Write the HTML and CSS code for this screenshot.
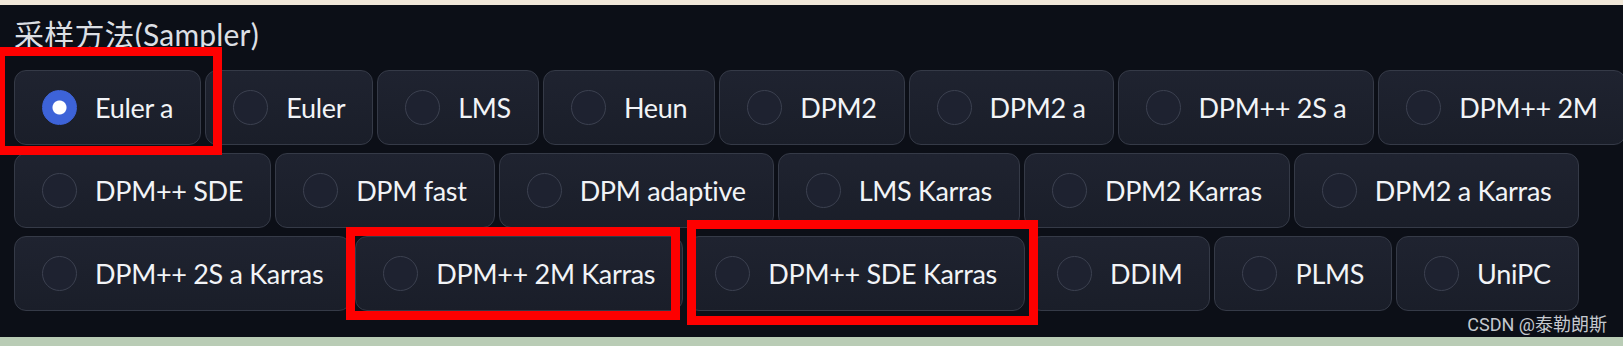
FILE: index.html
```html
<!DOCTYPE html>
<html>

<head>
    <meta charset="UTF-8">
    <title>采样方法</title>
    <link rel="stylesheet" href="styles.css">
</head>

<body>
    <div class="top-strip"></div>
    <div class="panel">
        <div class="panel-label">采样方法(Sampler)</div>
        <div class="options">
            <div class="row">
                <label class="opt"><input type="radio" name="sampler" checked><span>Euler a</span></label>
                <label class="opt"><input type="radio" name="sampler"><span>Euler</span></label>
                <label class="opt"><input type="radio" name="sampler"><span>LMS</span></label>
                <label class="opt"><input type="radio" name="sampler"><span>Heun</span></label>
                <label class="opt"><input type="radio" name="sampler"><span>DPM2</span></label>
                <label class="opt"><input type="radio" name="sampler"><span>DPM2 a</span></label>
                <label class="opt"><input type="radio" name="sampler"><span>DPM++ 2S a</span></label>
                <label class="opt"><input type="radio" name="sampler"><span>DPM++ 2M</span></label>
            </div>
            <div class="row">
                <label class="opt"><input type="radio" name="sampler"><span>DPM++ SDE</span></label>
                <label class="opt"><input type="radio" name="sampler"><span>DPM fast</span></label>
                <label class="opt"><input type="radio" name="sampler"><span>DPM adaptive</span></label>
                <label class="opt"><input type="radio" name="sampler"><span>LMS Karras</span></label>
                <label class="opt"><input type="radio" name="sampler"><span>DPM2 Karras</span></label>
                <label class="opt"><input type="radio" name="sampler"><span>DPM2 a Karras</span></label>
            </div>
            <div class="row">
                <label class="opt"><input type="radio" name="sampler"><span>DPM++ 2S a Karras</span></label>
                <label class="opt"><input type="radio" name="sampler"><span>DPM++ 2M Karras</span></label>
                <label class="opt"><input type="radio" name="sampler"><span>DPM++ SDE Karras</span></label>
                <label class="opt"><input type="radio" name="sampler"><span>DDIM</span></label>
                <label class="opt"><input type="radio" name="sampler"><span>PLMS</span></label>
                <label class="opt"><input type="radio" name="sampler"><span>UniPC</span></label>
            </div>
        </div>

        <!-- annotation boxes drawn over the screenshot -->
        <div class="mark mark-1"></div>
        <div class="mark mark-2"></div>
        <div class="mark mark-3"></div>

        <div class="watermark">CSDN @泰勒朗斯</div>
    </div>
    <div class="bottom-strip"></div>
</body>

</html>
```
FILE: styles.css
```css
/* Sampler radio group, dark theme */
body {
    margin: 0;
    padding: 0;
    background-color: #0c0f17;
    font-family: Lato, "Noto Sans CJK SC", sans-serif;
}

.top-strip {
    height: 5px;
    background-color: #f1e8d9;
}

.bottom-strip {
    height: 9px;
    background-color: #b9ccb5;
}

.panel {
    position: relative;
    height: 332px;
    box-sizing: border-box;
    padding: 11px 0 0 14px;
    background-color: #0c0f17;
    overflow: hidden;
}

.panel-label {
    font-size: 30px;
    line-height: 36px;
    letter-spacing: 0.2px;
    color: #dcdfe4;
    margin-bottom: 18px;
}

.options {
    display: flex;
    flex-direction: column;
    gap: 8px;
}

.row {
    display: flex;
    gap: 4px;
}

.opt {
    display: flex;
    align-items: center;
    height: 75px;
    box-sizing: border-box;
    padding: 0 27px;
    background: linear-gradient(#1f2330, #1a1e29);
    border: 1px solid #353a47;
    border-radius: 12px;
    color: #f2f4f7;
    font-size: 27px;
    letter-spacing: -0.3px;
    white-space: nowrap;
    cursor: pointer;
}

.opt input {
    appearance: none;
    -webkit-appearance: none;
    width: 35px;
    height: 35px;
    margin: 0 18px 0 0;
    flex-shrink: 0;
    border: 1.5px solid #3c4150;
    border-radius: 50%;
    background-color: #1e2230;
}

.opt input:checked {
    border-color: #3d63d8;
    background: radial-gradient(circle, #fff 0 6.5px, #3d63d8 7.5px);
}

.mark {
    position: absolute;
    border: 9px solid #fe0000;
}

.mark-1 {
    left: -4px;
    top: 42px;
    width: 208px;
    height: 90px;
}

.mark-2 {
    left: 346px;
    top: 222px;
    width: 316px;
    height: 75px;
}

.mark-3 {
    left: 687px;
    top: 215px;
    width: 333px;
    height: 87px;
}

.watermark {
    position: absolute;
    right: 16px;
    top: 310px;
    font-family: Roboto, "Noto Sans CJK SC", sans-serif;
    font-size: 18px;
    line-height: 20px;
    color: #c4c8ce;
}
```
